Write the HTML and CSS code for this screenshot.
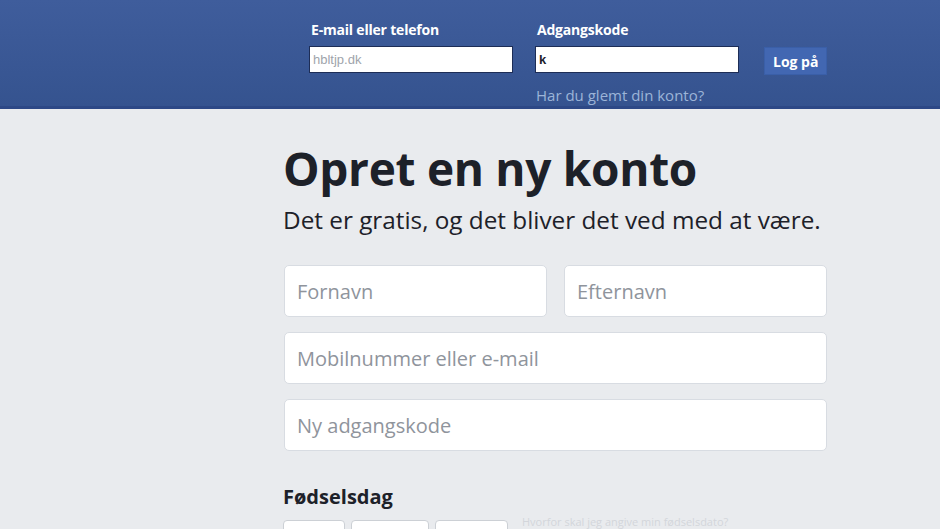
FILE: index.html
```html
<!DOCTYPE html>
<html lang="da">
<head>
  <meta charset="UTF-8">
  <title>Facebook - Log på eller tilmeld dig</title>
  <link rel="stylesheet" href="styles.css">
</head>
<body>
  <header class="topbar">
    <form class="login">
      <div class="login-field">
        <label for="email">E-mail eller telefon</label>
        <input type="text" id="email" value="hbltjp.dk">
      </div>
      <div class="login-field">
        <label for="pass">Adgangskode</label>
        <input type="text" id="pass" class="typed" value="k">
        <a href="#" class="forgot">Har du glemt din konto?</a>
      </div>
      <button type="button" class="login-button">Log på</button>
    </form>
  </header>

  <main class="signup">
    <h1>Opret en ny konto</h1>
    <p class="tagline">Det er gratis, og det bliver det ved med at være.</p>

    <div class="name-row">
      <input type="text" class="field" placeholder="Fornavn">
      <input type="text" class="field" placeholder="Efternavn">
    </div>
    <input type="text" class="field" placeholder="Mobilnummer eller e-mail">
    <input type="password" class="field" placeholder="Ny adgangskode">

    <h2 class="birthday">Fødselsdag</h2>
    <div class="birthday-row">
      <select class="day"><option>Dag</option></select>
      <select class="month"><option>Måned</option></select>
      <select class="year"><option>År</option></select>
      <a href="#" class="why">Hvorfor skal jeg angive min fødselsdato?</a>
    </div>
  </main>
</body>
</html>
```

FILE: styles.css
```css
body {
  margin: 0;
  font-family: "Open Sans", "Liberation Sans", sans-serif;
  background: #e9ebee;
  color: #1d2129;
  height: 100vh;
  overflow: hidden;
}

.topbar {
  height: 106px;
  background: linear-gradient(#3f5d9c, #35538f);
  border-bottom: 3px solid #2d4886;
}
.login {
  display: flex;
  align-items: flex-start;
  padding: 20px 0 0 309px;
  gap: 22px;
}
.login-field {
  display: flex;
  flex-direction: column;
}
.login-field label {
  color: #fff;
  font-size: 14px;
  font-weight: bold;
  height: 18px;
  margin: 0 0 8px 2px;
  letter-spacing: -0.2px;
}
.login-field input {
  width: 196px;
  height: 25px;
  margin: 0;
  padding: 0 3px;
  border: 1px solid #1d2d56;
  background: #fff;
  font-family: "Liberation Sans", sans-serif;
  font-size: 13px;
  color: #a0a4ab;
  outline: none;
}
.login-field input.typed {
  color: #1d2129;
  font-weight: bold;
}
.forgot {
  color: #9cb4d8;
  font-size: 15px;
  text-decoration: none;
  margin: 12px 0 0 1px;
}
.login-button {
  margin: 27px 0 0 3px;
  height: 28px;
  padding: 0 8px;
  background: #4267b2;
  border: 1px solid #3a5fa8;
  color: #fff;
  font-family: inherit;
  font-size: 14px;
  font-weight: bold;
}

.signup {
  width: 544px;
  margin-left: 283px;
  display: flex;
  flex-direction: column;
  gap: 15px;
}
.signup h1 {
  margin: 32px 0 0;
  font-size: 46px;
  font-weight: bold;
  line-height: 54px;
  letter-spacing: -0.3px;
}
.tagline {
  margin: -6px 0 14px;
  font-size: 24.3px;
  line-height: 32px;
  color: #1d2129;
}
.name-row {
  display: flex;
  gap: 16px;
}
.name-row .field {
  flex: 1;
  min-width: 0;
}
.field {
  height: 52px;
  margin: 0 0 0 1px;
  padding: 0 12px;
  border: 1px solid #d8dce2;
  border-radius: 5px;
  background: #fff;
  font-family: inherit;
  font-size: 20px;
  color: #1d2129;
  box-sizing: border-box;
}
.field::placeholder {
  color: #8f949c;
}
.birthday {
  margin: 17px 0 0;
  font-size: 20px;
  line-height: 27px;
  font-weight: bold;
}
.birthday-row {
  display: flex;
  align-items: flex-start;
  gap: 6px;
  margin-top: -5px;
}
.birthday-row select {
  height: 40px;
  border: 1px solid #ccd0d5;
  border-radius: 4px;
  background: #fff;
  font-size: 18px;
}
.day { width: 62px; }
.month { width: 78px; }
.year { width: 73px; }
.why {
  margin: -4px 0 0 8px;
  font-size: 11px;
  line-height: 12px;
  color: #d3d6db;
  text-decoration: none;
}
```
